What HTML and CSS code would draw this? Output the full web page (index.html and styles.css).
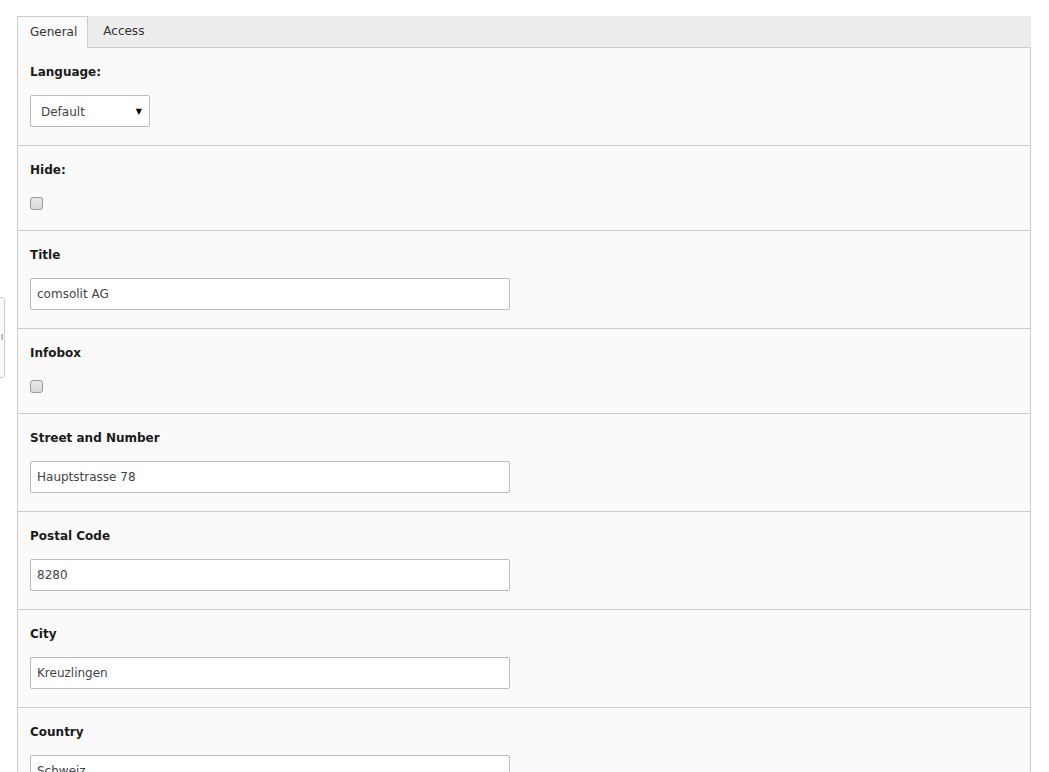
FILE: index.html
```html
<!DOCTYPE html>
<html>
<head>
<meta charset="utf-8">
<link rel="stylesheet" href="styles.css">
</head>
<body>
<div class="handle"><span class="handle-dot"></span></div>
<div class="editor">
  <div class="tabs">
    <div class="tab active">General</div>
    <div class="tab">Access</div>
  </div>
  <div class="panel">
    <div class="section">
      <div class="label">Language:</div>
      <div class="select"><span>Default</span><span class="arrow">&#9660;</span></div>
    </div>
    <div class="section">
      <div class="label">Hide:</div>
      <div class="check-row"><span class="checkbox"></span></div>
    </div>
    <div class="section">
      <div class="label">Title</div>
      <div class="input">comsolit AG</div>
    </div>
    <div class="section">
      <div class="label">Infobox</div>
      <div class="check-row"><span class="checkbox"></span></div>
    </div>
    <div class="section">
      <div class="label">Street and Number</div>
      <div class="input">Hauptstrasse 78</div>
    </div>
    <div class="section">
      <div class="label">Postal Code</div>
      <div class="input">8280</div>
    </div>
    <div class="section">
      <div class="label">City</div>
      <div class="input">Kreuzlingen</div>
    </div>
    <div class="section">
      <div class="label">Country</div>
      <div class="input">Schweiz</div>
    </div>
  </div>
</div>
</body>
</html>
```
FILE: styles.css
```css
html, body {
  margin: 0;
  padding: 0;
  background: #ffffff;
  height: 772px;
  overflow: hidden;
}
body {
  font-family: "DejaVu Sans", Verdana, sans-serif;
  font-size: 12px;
  color: #000;
  padding: 16px 18px 0 17px;
  position: relative;
}
.handle {
  position: absolute;
  left: -20px;
  top: 297px;
  width: 23px;
  height: 79px;
  border: 1px solid #cccccc;
  border-radius: 3px;
  background: #fafafa;
}
.handle-dot {
  position: absolute;
  right: 1px;
  top: 36px;
  width: 2px;
  height: 6px;
  background: #bbbbbb;
}
.editor {
  width: 1014px;
}
.tabs {
  display: flex;
  height: 31px;
  background: #ededed;
  border-bottom: 1px solid #cccccc;
}
.tab {
  padding: 0 12px 0 13px;
  line-height: 31px;
  color: #333333;
  font-size: 12px;
}
.tab.active {
  background: #fafafa;
  border: 1px solid #cccccc;
  border-bottom: none;
  line-height: 30px;
  padding: 0 10px 0 12px;
  margin-bottom: -1px;
  box-sizing: border-box;
  height: 32px;
}
.tab + .tab {
  padding-left: 15px;
}
.panel {
  background: #fafafa;
  border-left: 1px solid #cccccc;
  border-right: 1px solid #cccccc;
}
.section {
  padding: 16px 12px 18px 12px;
  border-bottom: 1px solid #cccccc;
}
.label {
  font-weight: bold;
  line-height: 16px;
  height: 16px;
  margin-bottom: 15px;
  color: #1a1a1a;
}
.select {
  box-sizing: border-box;
  width: 120px;
  height: 32px;
  background: #ffffff;
  border: 1px solid #bbbbbb;
  border-radius: 2px;
  display: flex;
  align-items: center;
  justify-content: space-between;
  padding: 1px 7px 0 10px;
  color: #444444;
}
.arrow {
  font-size: 8px;
  color: #000;
}
.input {
  box-sizing: border-box;
  width: 480px;
  height: 32px;
  background: #ffffff;
  border: 1px solid #bbbbbb;
  border-radius: 2px;
  padding: 0 6px;
  line-height: 30px;
  color: #444444;
}
.check-row {
  height: 19px;
  padding-top: 4px;
  box-sizing: border-box;
}
.checkbox {
  display: block;
  box-sizing: border-box;
  width: 13px;
  height: 13px;
  border: 1px solid #999999;
  border-radius: 3px;
  background: linear-gradient(#e9e9e9, #d9d9d9);
}
```
